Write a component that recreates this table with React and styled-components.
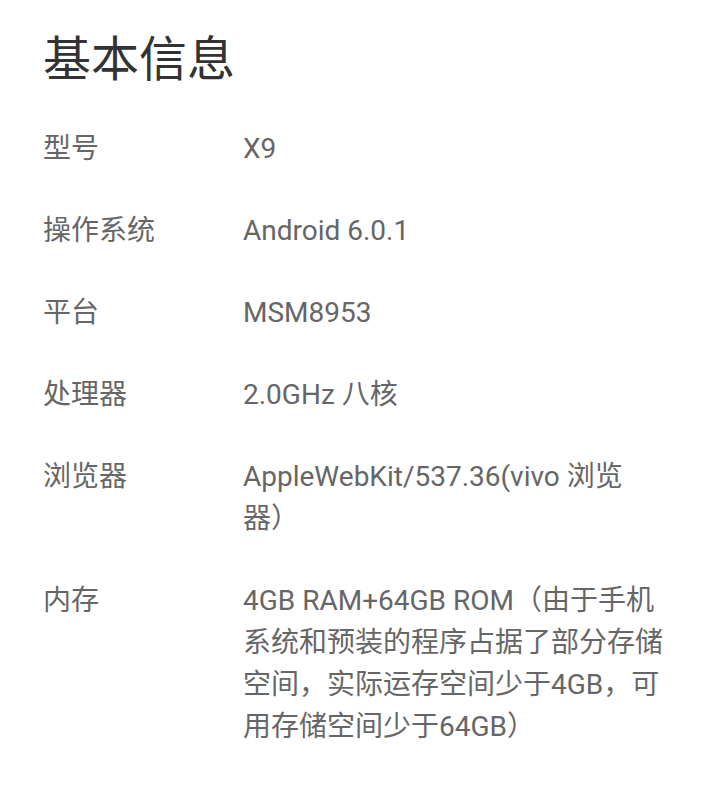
import React from 'react';
import styled, { createGlobalStyle } from 'styled-components';

const GlobalStyle = createGlobalStyle`
    body {
        margin: 0;
        background: #fff;
        font-family: Roboto, "Noto Sans CJK SC", sans-serif;
    }
`

const rows = [
    { label: '型号', value: 'X9' },
    { label: '操作系统', value: 'Android 6.0.1' },
    { label: '平台', value: 'MSM8953' },
    { label: '处理器', value: '2.0GHz 八核' },
    { label: '浏览器', value: 'AppleWebKit/537.36(vivo 浏览器）' },
    { label: '内存', value: '4GB RAM+64GB ROM（由于手机系统和预装的程序占据了部分存储空间，实际运存空间少于4GB，可用存储空间少于64GB）' },
];

const App = () => {
    return (
        <Page>
            <GlobalStyle />
            <Title>基本信息</Title>
            <InfoList>
                {rows.map(row => (
                    <React.Fragment key={row.label}>
                        <Label>{row.label}</Label>
                        <Value>{row.value}</Value>
                    </React.Fragment>
                ))}
            </InfoList>
        </Page>
    );
}

const Page = styled.div`
    width: 670px;
    padding: 28px 0 40px 43px;
    box-sizing: content-box;
`

const Title = styled.h1`
    margin: 0;
    font-size: 48px;
    line-height: 64px;
    font-weight: normal;
    color: #333;
`

const InfoList = styled.dl`
    margin: 36px 0 0 0;
    display: grid;
    grid-template-columns: 200px 427px;
    row-gap: 40px;
    font-size: 28px;
    line-height: 42px;
    color: #666;
    text-spacing-trim: space-all;
`

const Label = styled.dt`
    margin: 0;
`

const Value = styled.dd`
    margin: 0;
`

export default App;
